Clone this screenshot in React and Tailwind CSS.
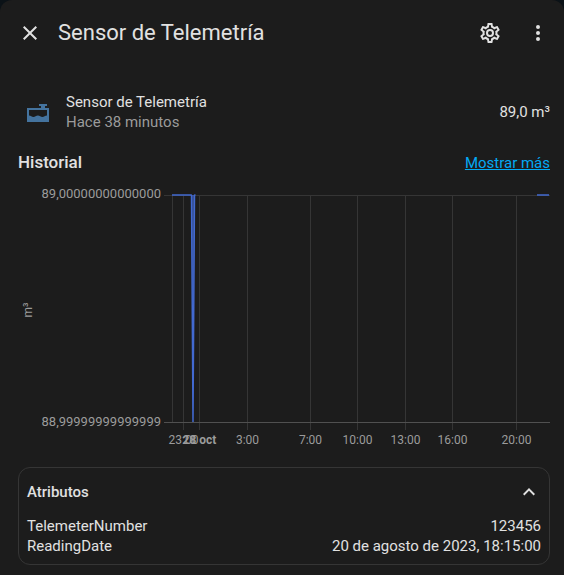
import { useState } from "react";

const TIME_TICKS = [
  { x: 165.5, label: "23:00" },
  { x: 181.5, label: "28 oct", bold: true },
  { x: 229.5, label: "3:00" },
  { x: 292.5, label: "7:00" },
  { x: 339.5, label: "10:00" },
  { x: 387.5, label: "13:00" },
  { x: 434.5, label: "16:00" },
  { x: 498.5, label: "20:00" },
];

const ATTRIBUTES = [
  { name: "TelemeterNumber", value: "123456" },
  { name: "ReadingDate", value: "20 de agosto de 2023, 18:15:00" },
];

function Icon({ d, className = "size-6" }) {
  return (
    <svg viewBox="0 0 24 24" className={className} fill="currentColor" aria-hidden="true">
      <path d={d} fillRule="evenodd" />
    </svg>
  );
}

const CLOSE =
  "M19,6.41L17.59,5L12,10.59L6.41,5L5,6.41L10.59,12L5,17.59L6.41,19L12,13.41L17.59,19L19,17.59L13.41,12L19,6.41Z";
const COG =
  "M12,8A4,4 0 0,1 16,12A4,4 0 0,1 12,16A4,4 0 0,1 8,12A4,4 0 0,1 12,8M12,10A2,2 0 0,0 10,12A2,2 0 0,0 12,14A2,2 0 0,0 14,12A2,2 0 0,0 12,10M10,22C9.75,22 9.54,21.82 9.5,21.58L9.13,18.93C8.5,18.68 7.96,18.34 7.44,17.94L4.95,18.95C4.73,19.03 4.46,18.95 4.34,18.73L2.34,15.27C2.21,15.05 2.27,14.78 2.46,14.63L4.57,12.97L4.5,12L4.57,11L2.46,9.37C2.27,9.22 2.21,8.95 2.34,8.73L4.34,5.27C4.46,5.05 4.73,4.96 4.95,5.05L7.44,6.05C7.96,5.66 8.5,5.32 9.13,5.07L9.5,2.42C9.54,2.18 9.75,2 10,2H14C14.25,2 14.46,2.18 14.5,2.42L14.87,5.07C15.5,5.32 16.04,5.66 16.56,6.05L19.05,5.05C19.27,4.96 19.54,5.05 19.66,5.27L21.66,8.73C21.79,8.95 21.73,9.22 21.54,9.37L19.43,11L19.5,12L19.43,13L21.54,14.63C21.73,14.78 21.79,15.05 21.66,15.27L19.66,18.73C19.54,18.95 19.27,19.04 19.05,18.95L16.56,17.95C16.04,18.34 15.5,18.68 14.87,18.93L14.5,21.58C14.46,21.82 14.25,22 14,22H10M11.25,4L10.88,6.61C9.68,6.86 8.62,7.5 7.85,8.39L5.44,7.35L4.69,8.65L6.8,10.2C6.4,11.37 6.4,12.64 6.8,13.8L4.68,15.36L5.43,16.66L7.86,15.62C8.63,16.5 9.68,17.14 10.87,17.38L11.24,20H12.76L13.13,17.39C14.32,17.14 15.37,16.5 16.14,15.62L18.57,16.66L19.32,15.36L17.2,13.81C17.6,12.64 17.6,11.37 17.2,10.2L19.31,8.65L18.56,7.35L16.15,8.39C15.38,7.5 14.32,6.86 13.12,6.62L12.75,4H11.25Z";
const DOTS =
  "M12,16A2,2 0 0,1 14,18A2,2 0 0,1 12,20A2,2 0 0,1 10,18A2,2 0 0,1 12,16M12,10A2,2 0 0,1 14,12A2,2 0 0,1 12,14A2,2 0 0,1 10,12A2,2 0 0,1 12,10M12,4A2,2 0 0,1 14,6A2,2 0 0,1 12,8A2,2 0 0,1 10,6A2,2 0 0,1 12,4Z";
const TANK =
  "M1,8H15V6H13V4H21V6H19V8H23V22H1V8M3,10V15.4C4,15.4 4.6,15.7 5.2,16.2C6.6,17.3 8.2,17.3 9.6,16.2C10.9,15.1 12.9,15.1 14.2,16.2C15.6,17.3 17.2,17.3 18.6,16.2C19.3,15.7 20,15.4 21,15.4V10H3Z";
const CHEVRON_UP = "M7.41,15.41L12,10.83L16.59,15.41L18,14L12,8L6,14L7.41,15.41Z";
const CHEVRON_DOWN = "M7.41,8.59L12,13.17L16.59,8.59L18,10L12,16L6,10L7.41,8.59Z";

function HistoryChart() {
  return (
    <svg
      viewBox="0 0 532 268"
      className="block h-auto w-full fill-[#9b9b9b] text-[12px]"
      role="img"
      aria-label="Historial en m³"
    >
      <g stroke="#353535">
        <path d="M146 11.5H532M154.5 11V238" />
        {TIME_TICKS.map((tick) => (
          <path key={tick.label} d={`M${tick.x} 11V246`} />
        ))}
      </g>
      <path d="M146 238.5H532" stroke="#505050" />
      <path d="M173.5 11L175 238L176.5 11Z" fill="#4269d0" fillOpacity="0.6" />
      <path
        d="M154 11H173.5L175 238L176.5 11H177.5M519 11H531"
        fill="none"
        stroke="#4269d0"
        strokeWidth="1.5"
        strokeLinejoin="bevel"
      />
      <g textAnchor="end" className="text-[13px]">
        <text x="143" y="14">89,00000000000000</text>
        <text x="143" y="242">88,99999999999999</text>
      </g>
      <g textAnchor="middle">
        {TIME_TICKS.map((tick) => (
          <text key={tick.label} x={tick.x} y="260" fontWeight={tick.bold ? 700 : 400}>
            {tick.label}
          </text>
        ))}
        <text transform="translate(14 126) rotate(-90)">m³</text>
      </g>
    </svg>
  );
}

export default function App() {
  const [open, setOpen] = useState(true);

  return (
    <div className="min-h-screen bg-[#0b1217] font-['Roboto',sans-serif] text-[15px] text-[#e1e1e1]">
      <main className="min-h-screen rounded-t-xl bg-[#1c1c1c]">
        <header className="flex h-[66px] items-center gap-4 pr-[14px] pl-[18px]">
          <button type="button" aria-label="Cerrar" className="flex size-6 items-center justify-center">
            <Icon d={CLOSE} />
          </button>
          <h1 className="grow text-[22px] leading-7">Sensor de Telemetría</h1>
          <div className="flex gap-6">
            <button type="button" aria-label="Configuración" className="size-6">
              <Icon d={COG} />
            </button>
            <button type="button" aria-label="Más opciones" className="size-6">
              <Icon d={DOTS} />
            </button>
          </div>
        </header>

        <div className="pt-[26px] pr-[14px] pl-[18px]">
          <section className="flex h-10 items-center gap-4 pl-2">
            <span className="text-[#44739e]">
              <Icon d={TANK} />
            </span>
            <div className="grow leading-5">
              <p>Sensor de Telemetría</p>
              <p className="text-[#9b9b9b]">Hace 38 minutos</p>
            </div>
            <p>89,0 m³</p>
          </section>

          <section className="pt-4">
            <div className="flex h-[30px] items-center justify-between">
              <h2 className="text-[17px] font-medium">Historial</h2>
              <a href="#historial" className="text-[#03a9f4] underline">
                Mostrar más
              </a>
            </div>
            <div className="pt-[6px]">
              <HistoryChart />
            </div>
          </section>

          <section className="mt-[15px] rounded-xl border border-[#353535] px-2 pb-2">
            <button
              type="button"
              aria-expanded={open}
              onClick={() => setOpen(!open)}
              className="flex h-12 w-full items-center justify-between font-medium"
            >
              Atributos
              <Icon d={open ? CHEVRON_UP : CHEVRON_DOWN} />
            </button>
            {open && (
              <dl className="leading-5">
                {ATTRIBUTES.map((attribute) => (
                  <div key={attribute.name} className="flex justify-between">
                    <dt>{attribute.name}</dt>
                    <dd>{attribute.value}</dd>
                  </div>
                ))}
              </dl>
            )}
          </section>
        </div>
      </main>
    </div>
  );
}
